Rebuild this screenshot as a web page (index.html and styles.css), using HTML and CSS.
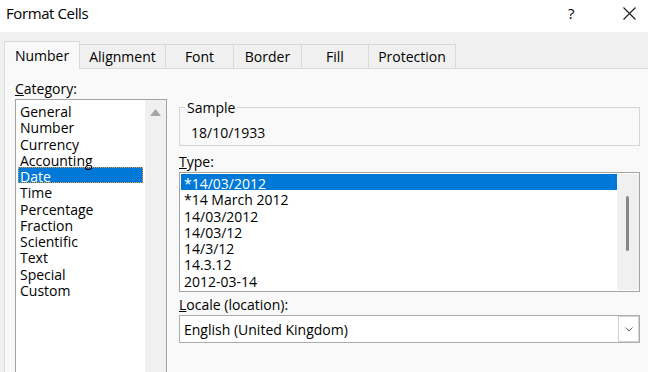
FILE: index.html
```html
<!DOCTYPE html>
<html>
<head>
<meta charset="utf-8">
<link rel="stylesheet" href="styles.css">
</head>
<body>
<div class="titlebar">
  <span class="title">Format Cells</span>
  <span class="help">?</span>
  <svg class="close" width="13" height="13" viewBox="0 0 13 13"><path d="M0.5 0.5 L12.5 12.5 M12.5 0.5 L0.5 12.5" stroke="#1a1a1a" stroke-width="1.1" fill="none"/></svg>
</div>
<div class="main">
  <div class="tabs">
    <div class="tab active t-number">Number</div>
    <div class="tab t-align">Alignment</div>
    <div class="tab t-font">Font</div>
    <div class="tab t-border">Border</div>
    <div class="tab t-fill">Fill</div>
    <div class="tab t-prot">Protection</div>
  </div>
  <div class="panel">
    <div class="col-left">
      <div class="label"><u>C</u>ategory:</div>
      <div class="listbox cat">
        <ul class="items">
          <li>General</li>
          <li>Number</li>
          <li>Currency</li>
          <li>Accounting</li>
          <li class="sel focus">Date</li>
          <li>Time</li>
          <li>Percentage</li>
          <li>Fraction</li>
          <li>Scientific</li>
          <li>Text</li>
          <li>Special</li>
          <li>Custom</li>
        </ul>
        <div class="vscroll">
          <svg class="arrow-up" width="11" height="7" viewBox="0 0 11 7"><path d="M5.5 0 L11 7 L0 7 Z" fill="#a6a6a6"/></svg>
        </div>
      </div>
    </div>
    <div class="col-right">
      <fieldset class="sample">
        <legend>Sample</legend>
        <div class="sample-value">18/10/1933</div>
      </fieldset>
      <div class="label type-label"><u>T</u>ype:</div>
      <div class="listbox type">
        <ul class="items">
          <li class="sel">*14/03/2012</li>
          <li>*14 March 2012</li>
          <li>14/03/2012</li>
          <li>14/03/12</li>
          <li>14/3/12</li>
          <li>14.3.12</li>
          <li>2012-03-14</li>
        </ul>
        <div class="vscroll thin"><span class="thumb"></span></div>
      </div>
      <div class="label locale-label"><u>L</u>ocale (location):</div>
      <div class="combo">
        <span class="combo-text">English (United Kingdom)</span>
        <span class="combo-btn"><svg width="8" height="5" viewBox="0 0 8 5"><path d="M0.5 0.5 L4 4 L7.5 0.5" stroke="#606060" stroke-width="1" fill="none"/></svg></span>
      </div>
    </div>
  </div>
</div>
</body>
</html>
```

FILE: styles.css
```css
* { box-sizing: border-box; }
html, body { margin: 0; padding: 0; }
body {
  width: 648px;
  height: 372px;
  overflow: hidden;
  font-family: "Open Sans", "Noto Sans", sans-serif;
  font-size: 14px;
  color: #000;
  background: #f0f0f0;
}
.titlebar {
  height: 32px;
  background: #fff;
  display: flex;
  align-items: flex-start;
  padding: 3px 0 0 6px;
  line-height: 20px;
}
.title { font-size: 15px; letter-spacing: -0.4px; }
.help { margin-left: auto; width: 8px; font-size: 15px; }
.close { display: block; margin: 4px 12px 0 47px; }

.main { padding-left: 4px; }
.tabs { display: flex; align-items: flex-end; height: 36px; }
.tab {
  height: 24px;
  border: 1px solid #d9d9d9;
  border-bottom: none;
  margin-left: -1px;
  text-align: center;
  padding-top: 1px;
  line-height: 22px;
  background: #f0f0f0;
}
.tab.active {
  height: 28px;
  margin-left: 0;
  margin-bottom: -1px;
  line-height: 26px;
  background: #f9f9f9;
  position: relative;
  z-index: 1;
}
.t-number { width: 76px; }
.t-align { width: 87px; }
.t-font { width: 69px; }
.t-border { width: 69px; }
.t-fill { width: 68px; }
.t-prot { width: 88px; }

.panel {
  background: #f9f9f9;
  border-top: 1px solid #d9d9d9;
  border-left: 1px solid #d9d9d9;
  height: 310px;
  display: flex;
  gap: 12px;
  padding: 11px 0 0 10px;
}
.col-left { width: 152px; flex: none; }
.col-right { width: 461px; flex: none; margin-top: 19px; }

.label { padding-top: 1px; line-height: 16px; margin-bottom: 2px; white-space: nowrap; }
.type-label { margin-top: 7px; }
.locale-label { margin-top: 4px; }

.listbox {
  display: flex;
  border: 1px solid #a3a3a3;
  background: #fff;
}
.items { list-style: none; margin: 0; padding: 0; }
.items li { height: 16.25px; padding-top: 3px; line-height: 13.25px; white-space: nowrap; }
.sel { background: #0078d7; color: #fff; }
.focus { outline: 1px dotted #e89a3c; outline-offset: -1px; }

.cat { height: 290px; }
.cat .items { width: 129px; padding: 2px; flex: none; }
.cat .items li { padding-left: 2px; }
.vscroll { background: #f0f0f0; flex: none; width: 21px; }
.arrow-up { display: block; margin: 9px 0 0 5px; }

.type { height: 120px; padding: 1px 0 1px 1px; }
.type .items { width: 436px; flex: none; }
.type .items li { padding-left: 3px; }
.vscroll.thin { width: 22px; }
.thumb {
  display: block;
  width: 3px;
  height: 55px;
  margin: 22px 0 0 9px;
  background: #878787;
  border-radius: 2px;
}

.sample {
  margin: 0;
  padding: 10px 0 4px 0;
  border: 1px solid #d6d6d6;
  width: 461px;
}
.sample legend {
  margin-left: 5px;
  padding: 2px 2px 0;
  line-height: 14px;
}
.sample-value { line-height: 16px; padding-left: 11px; }

.combo {
  height: 28px;
  border: 1px solid #adadad;
  background: #fff;
  display: flex;
  align-items: stretch;
}
.combo-text {
  flex: 1;
  padding: 6px 0 0 4px;
  line-height: 16px;
  white-space: nowrap;
}
.combo-btn {
  width: 21px;
  flex: none;
  border: 1px solid #d2d2d2;
  background: #fff;
  display: flex;
  align-items: center;
  justify-content: center;
}
.combo-btn svg { display: block; }
```
